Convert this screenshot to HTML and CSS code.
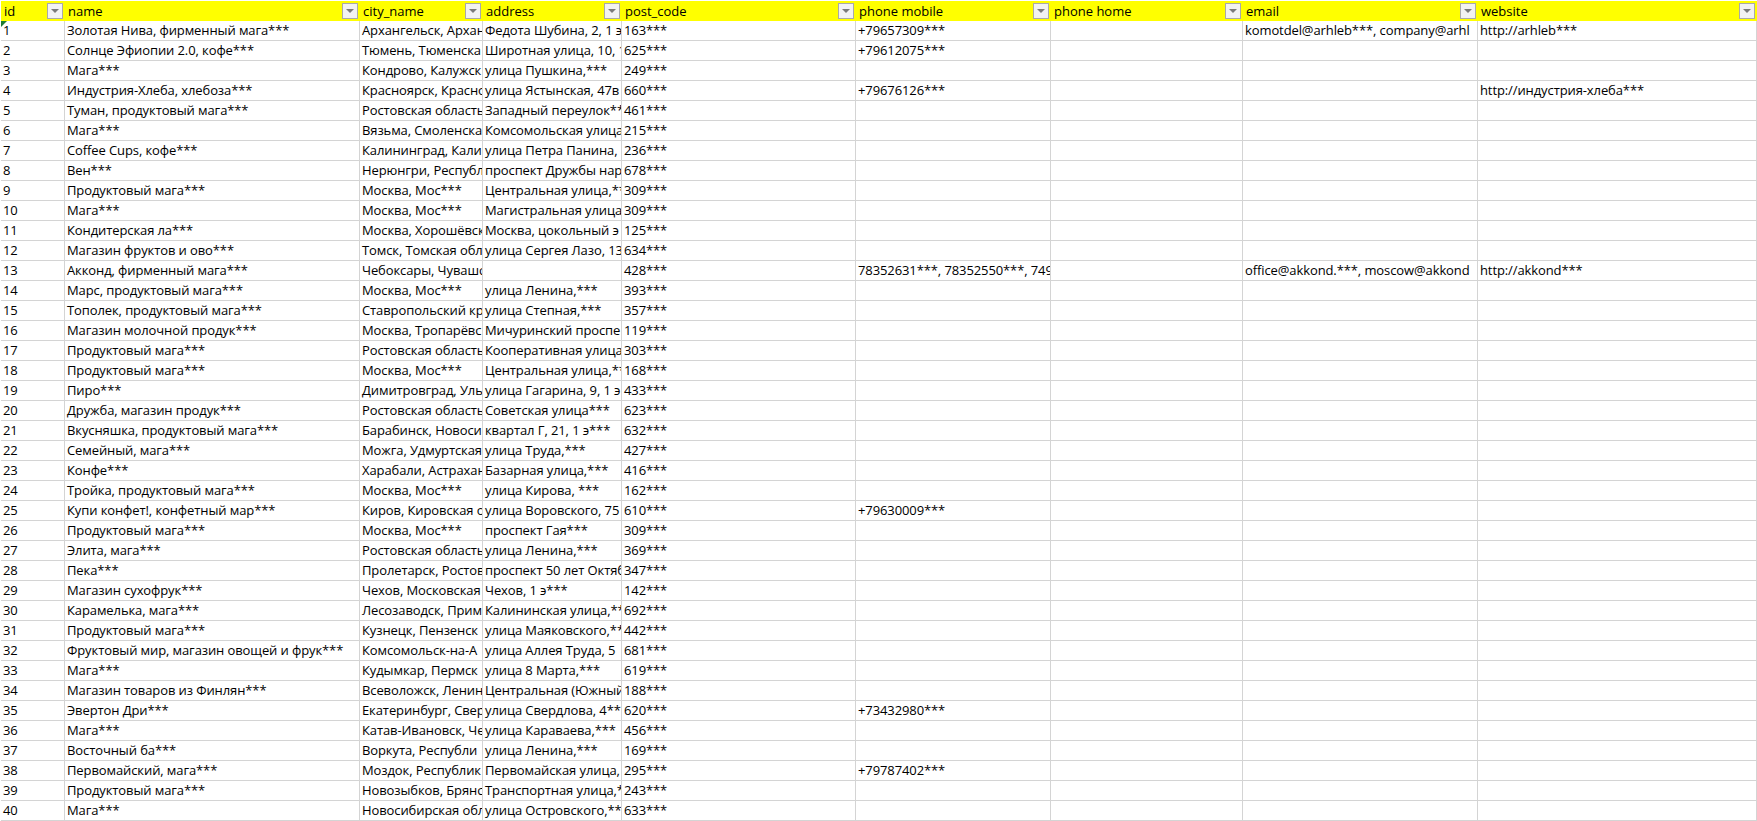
FILE: index.html
```html
<!DOCTYPE html>
<html lang="ru">
<head>
<meta charset="utf-8">
<title>Sheet</title>
<link rel="stylesheet" href="styles.css">
</head>
<body>
<table class="sheet">
<colgroup><col class="c-id"><col class="c-name"><col class="c-city"><col class="c-addr"><col class="c-post"><col class="c-mob"><col class="c-home"><col class="c-mail"><col class="c-web"></colgroup>
<thead><tr>
<th><div class="hd"><span>id</span><i class="filter"></i></div></th>
<th><div class="hd"><span>name</span><i class="filter"></i></div></th>
<th><div class="hd"><span>city_name</span><i class="filter"></i></div></th>
<th><div class="hd"><span>address</span><i class="filter"></i></div></th>
<th><div class="hd"><span>post_code</span><i class="filter"></i></div></th>
<th><div class="hd"><span>phone mobile</span><i class="filter"></i></div></th>
<th><div class="hd"><span>phone home</span><i class="filter"></i></div></th>
<th><div class="hd"><span>email</span><i class="filter"></i></div></th>
<th><div class="hd"><span>website</span><i class="filter"></i></div></th>
</tr></thead>
<tbody>
<tr><td class="flagged">1</td><td>Золотая Нива, фирменный мага***</td><td>Архангельск, Арханг</td><td>Федота Шубина, 2, 1 э</td><td>163***</td><td>+79657309***</td><td></td><td>komotdel@arhleb***, company@arhl</td><td>http://arhleb***</td></tr>
<tr><td>2</td><td>Солнце Эфиопии 2.0, кофе***</td><td>Тюмень, Тюменска</td><td>Широтная улица, 10, 1</td><td>625***</td><td>+79612075***</td><td></td><td></td><td></td></tr>
<tr><td>3</td><td>Мага***</td><td>Кондрово, Калужск</td><td>улица Пушкина,***</td><td>249***</td><td></td><td></td><td></td><td></td></tr>
<tr><td>4</td><td>Индустрия-Хлеба, хлебоза***</td><td>Красноярск, Красно</td><td>улица Ястынская, 47в</td><td>660***</td><td>+79676126***</td><td></td><td></td><td>http://индустрия-хлеба***</td></tr>
<tr><td>5</td><td>Туман, продуктовый мага***</td><td>Ростовская область</td><td>Западный переулок***</td><td>461***</td><td></td><td></td><td></td><td></td></tr>
<tr><td>6</td><td>Мага***</td><td>Вязьма, Смоленска</td><td>Комсомольская улица</td><td>215***</td><td></td><td></td><td></td><td></td></tr>
<tr><td>7</td><td>Coffee Cups, кофе***</td><td>Калининград, Кали</td><td>улица Петра Панина,</td><td>236***</td><td></td><td></td><td></td><td></td></tr>
<tr><td>8</td><td>Вен***</td><td>Нерюнгри, Республ</td><td>проспект Дружбы нар</td><td>678***</td><td></td><td></td><td></td><td></td></tr>
<tr><td>9</td><td>Продуктовый мага***</td><td>Москва, Мос***</td><td>Центральная улица,***</td><td>309***</td><td></td><td></td><td></td><td></td></tr>
<tr><td>10</td><td>Мага***</td><td>Москва, Мос***</td><td>Магистральная улица</td><td>309***</td><td></td><td></td><td></td><td></td></tr>
<tr><td>11</td><td>Кондитерская ла***</td><td>Москва, Хорошёвск</td><td>Москва, цокольный э</td><td>125***</td><td></td><td></td><td></td><td></td></tr>
<tr><td>12</td><td>Магазин фруктов и ово***</td><td>Томск, Томская обл</td><td>улица Сергея Лазо, 13</td><td>634***</td><td></td><td></td><td></td><td></td></tr>
<tr><td>13</td><td>Акконд, фирменный мага***</td><td>Чебоксары, Чувашс</td><td></td><td>428***</td><td>78352631***, 78352550***, 7499</td><td></td><td>office@akkond.***, moscow@akkond</td><td>http://akkond***</td></tr>
<tr><td>14</td><td>Марс, продуктовый мага***</td><td>Москва, Мос***</td><td>улица Ленина,***</td><td>393***</td><td></td><td></td><td></td><td></td></tr>
<tr><td>15</td><td>Тополек, продуктовый мага***</td><td>Ставропольский кр</td><td>улица Степная,***</td><td>357***</td><td></td><td></td><td></td><td></td></tr>
<tr><td>16</td><td>Магазин молочной продук***</td><td>Москва, Тропарёвс</td><td>Мичуринский проспе</td><td>119***</td><td></td><td></td><td></td><td></td></tr>
<tr><td>17</td><td>Продуктовый мага***</td><td>Ростовская область</td><td>Кооперативная улица</td><td>303***</td><td></td><td></td><td></td><td></td></tr>
<tr><td>18</td><td>Продуктовый мага***</td><td>Москва, Мос***</td><td>Центральная улица,***</td><td>168***</td><td></td><td></td><td></td><td></td></tr>
<tr><td>19</td><td>Пиро***</td><td>Димитровград, Уль</td><td>улица Гагарина, 9, 1 э</td><td>433***</td><td></td><td></td><td></td><td></td></tr>
<tr><td>20</td><td>Дружба, магазин продук***</td><td>Ростовская область</td><td>Советская улица***</td><td>623***</td><td></td><td></td><td></td><td></td></tr>
<tr><td>21</td><td>Вкусняшка, продуктовый мага***</td><td>Барабинск, Новоси</td><td>квартал Г, 21, 1 э***</td><td>632***</td><td></td><td></td><td></td><td></td></tr>
<tr><td>22</td><td>Семейный, мага***</td><td>Можга, Удмуртская</td><td>улица Труда,***</td><td>427***</td><td></td><td></td><td></td><td></td></tr>
<tr><td>23</td><td>Конфе***</td><td>Харабали, Астрахан</td><td>Базарная улица,***</td><td>416***</td><td></td><td></td><td></td><td></td></tr>
<tr><td>24</td><td>Тройка, продуктовый мага***</td><td>Москва, Мос***</td><td>улица Кирова, ***</td><td>162***</td><td></td><td></td><td></td><td></td></tr>
<tr><td>25</td><td>Купи конфет!, конфетный мар***</td><td>Киров, Кировская о</td><td>улица Воровского, 75</td><td>610***</td><td>+79630009***</td><td></td><td></td><td></td></tr>
<tr><td>26</td><td>Продуктовый мага***</td><td>Москва, Мос***</td><td>проспект Гая***</td><td>309***</td><td></td><td></td><td></td><td></td></tr>
<tr><td>27</td><td>Элита, мага***</td><td>Ростовская область</td><td>улица Ленина,***</td><td>369***</td><td></td><td></td><td></td><td></td></tr>
<tr><td>28</td><td>Пека***</td><td>Пролетарск, Ростов</td><td>проспект 50 лет Октяб</td><td>347***</td><td></td><td></td><td></td><td></td></tr>
<tr><td>29</td><td>Магазин сухофрук***</td><td>Чехов, Московская</td><td>Чехов, 1 э***</td><td>142***</td><td></td><td></td><td></td><td></td></tr>
<tr><td>30</td><td>Карамелька, мага***</td><td>Лесозаводск, Прим</td><td>Калининская улица,***</td><td>692***</td><td></td><td></td><td></td><td></td></tr>
<tr><td>31</td><td>Продуктовый мага***</td><td>Кузнецк, Пензенск</td><td>улица Маяковского,***</td><td>442***</td><td></td><td></td><td></td><td></td></tr>
<tr><td>32</td><td>Фруктовый мир, магазин овощей и фрук***</td><td>Комсомольск-на-А</td><td>улица Аллея Труда, 5</td><td>681***</td><td></td><td></td><td></td><td></td></tr>
<tr><td>33</td><td>Мага***</td><td>Кудымкар, Пермск</td><td>улица 8 Марта,***</td><td>619***</td><td></td><td></td><td></td><td></td></tr>
<tr><td>34</td><td>Магазин товаров из Финлян***</td><td>Всеволожск, Ленин</td><td>Центральная (Южный</td><td>188***</td><td></td><td></td><td></td><td></td></tr>
<tr><td>35</td><td>Эвертон Дри***</td><td>Екатеринбург, Свер</td><td>улица Свердлова, 4***</td><td>620***</td><td>+73432980***</td><td></td><td></td><td></td></tr>
<tr><td>36</td><td>Мага***</td><td>Катав-Ивановск, Че</td><td>улица Караваева,***</td><td>456***</td><td></td><td></td><td></td><td></td></tr>
<tr><td>37</td><td>Восточный ба***</td><td>Воркута, Республи</td><td>улица Ленина,***</td><td>169***</td><td></td><td></td><td></td><td></td></tr>
<tr><td>38</td><td>Первомайский, мага***</td><td>Моздок, Республик</td><td>Первомайская улица,</td><td>295***</td><td>+79787402***</td><td></td><td></td><td></td></tr>
<tr><td>39</td><td>Продуктовый мага***</td><td>Новозыбков, Брянс</td><td>Транспортная улица,*</td><td>243***</td><td></td><td></td><td></td><td></td></tr>
<tr><td>40</td><td>Мага***</td><td>Новосибирская обл</td><td>улица Островского,***</td><td>633***</td><td></td><td></td><td></td><td></td></tr>
</tbody>
</table>
</body>
</html>
```
FILE: styles.css
```css
* { box-sizing: border-box; }
html, body { margin: 0; background: #fff; }
body { padding: 1px 0 0 1px; overflow: hidden; font-family: "Open Sans", "Noto Sans", sans-serif; font-size: 13px; color: #000; }
.sheet { border-collapse: separate; border-spacing: 0; table-layout: fixed; width: 1756px; }
.c-id { width: 64px; } .c-name { width: 295px; } .c-city { width: 123px; } .c-addr { width: 139px; }
.c-post { width: 234px; } .c-mob { width: 195px; } .c-home { width: 192px; } .c-mail { width: 235px; } .c-web { width: 279px; }
th { height: 20px; padding: 0; background: #ffff00; font-weight: 400; text-align: left; }
.hd { display: flex; align-items: center; justify-content: space-between; height: 20px; padding: 0 2px 0 3px; }
.filter { width: 16px; height: 16px; flex: none; display: flex; align-items: center; justify-content: center; background: #f2f2f2; border: 1px solid #a9a9a9; }
.filter::after { content: ""; border-style: solid; border-width: 4px 4px 0; border-color: #7a7a7a transparent transparent; }
td { height: 20px; padding: 0 0 1px 2px; border-right: 1px solid #d4d4d4; border-bottom: 1px solid #d4d4d4; white-space: nowrap; overflow: hidden; line-height: 18px; letter-spacing: -0.1px; }
.flagged { position: relative; }
.flagged::before { content: ""; position: absolute; left: 0; top: 0; border-style: solid; border-width: 6px 6px 0 0; border-color: #1e7b34 transparent transparent; }
```
